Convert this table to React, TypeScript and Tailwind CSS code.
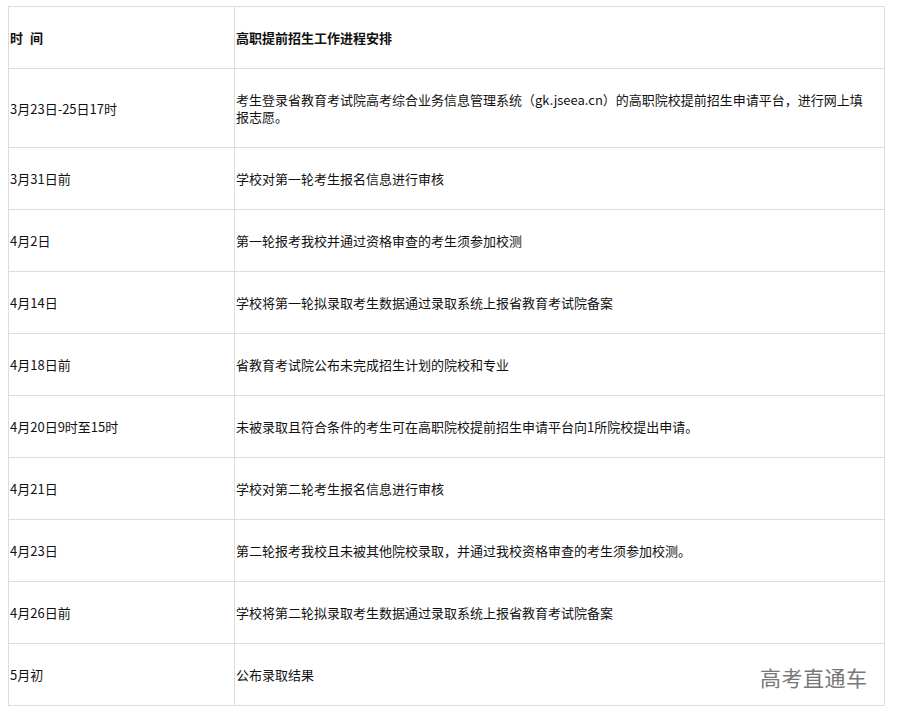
import React from 'react';

interface Row {
  time: string;
  plan: string;
}

const rows: Row[] = [
  {
    time: '3月23日-25日17时',
    plan: '考生登录省教育考试院高考综合业务信息管理系统（gk.jseea.cn）的高职院校提前招生申请平台，进行网上填报志愿。',
  },
  { time: '3月31日前', plan: '学校对第一轮考生报名信息进行审核' },
  { time: '4月2日', plan: '第一轮报考我校并通过资格审查的考生须参加校测' },
  { time: '4月14日', plan: '学校将第一轮拟录取考生数据通过录取系统上报省教育考试院备案' },
  { time: '4月18日前', plan: '省教育考试院公布未完成招生计划的院校和专业' },
  { time: '4月20日9时至15时', plan: '未被录取且符合条件的考生可在高职院校提前招生申请平台向1所院校提出申请。' },
  { time: '4月21日', plan: '学校对第二轮考生报名信息进行审核' },
  { time: '4月23日', plan: '第二轮报考我校且未被其他院校录取，并通过我校资格审查的考生须参加校测。' },
  { time: '4月26日前', plan: '学校将第二轮拟录取考生数据通过录取系统上报省教育考试院备案' },
  { time: '5月初', plan: '公布录取结果' },
];

const cell = 'border border-[#dddddd] py-[22px] pl-px pr-[11px] align-middle text-left';

export default function App() {
  return (
    <div
      className="relative w-[897px] h-[718px] bg-white text-[13px] leading-[17px] text-[#111]"
      style={{ fontFamily: '"Microsoft YaHei", "Noto Sans CJK SC", "Noto Sans", sans-serif' }}
    >
      <div className="pt-[6px] pl-[8px]">
        <table className="border-collapse w-[877px] table-fixed">
          <colgroup>
            <col className="w-[226px]" />
            <col />
          </colgroup>
          <thead>
            <tr>
              <th className={`${cell} font-bold`}>
                时<span className="inline-block w-[7px]" />间
              </th>
              <th className={`${cell} font-bold`}>高职提前招生工作进程安排</th>
            </tr>
          </thead>
          <tbody>
            {rows.map((row, i) => (
              <tr key={i}>
                <td className={cell}>{row.time}</td>
                <td className={cell}>{row.plan}</td>
              </tr>
            ))}
          </tbody>
        </table>
      </div>

      {/* watermark */}
      <div className="absolute left-[760px] top-[664px] text-[21px] leading-[26px] text-[#777] tracking-[0.5px]">
        高考直通车
      </div>
    </div>
  );
}
